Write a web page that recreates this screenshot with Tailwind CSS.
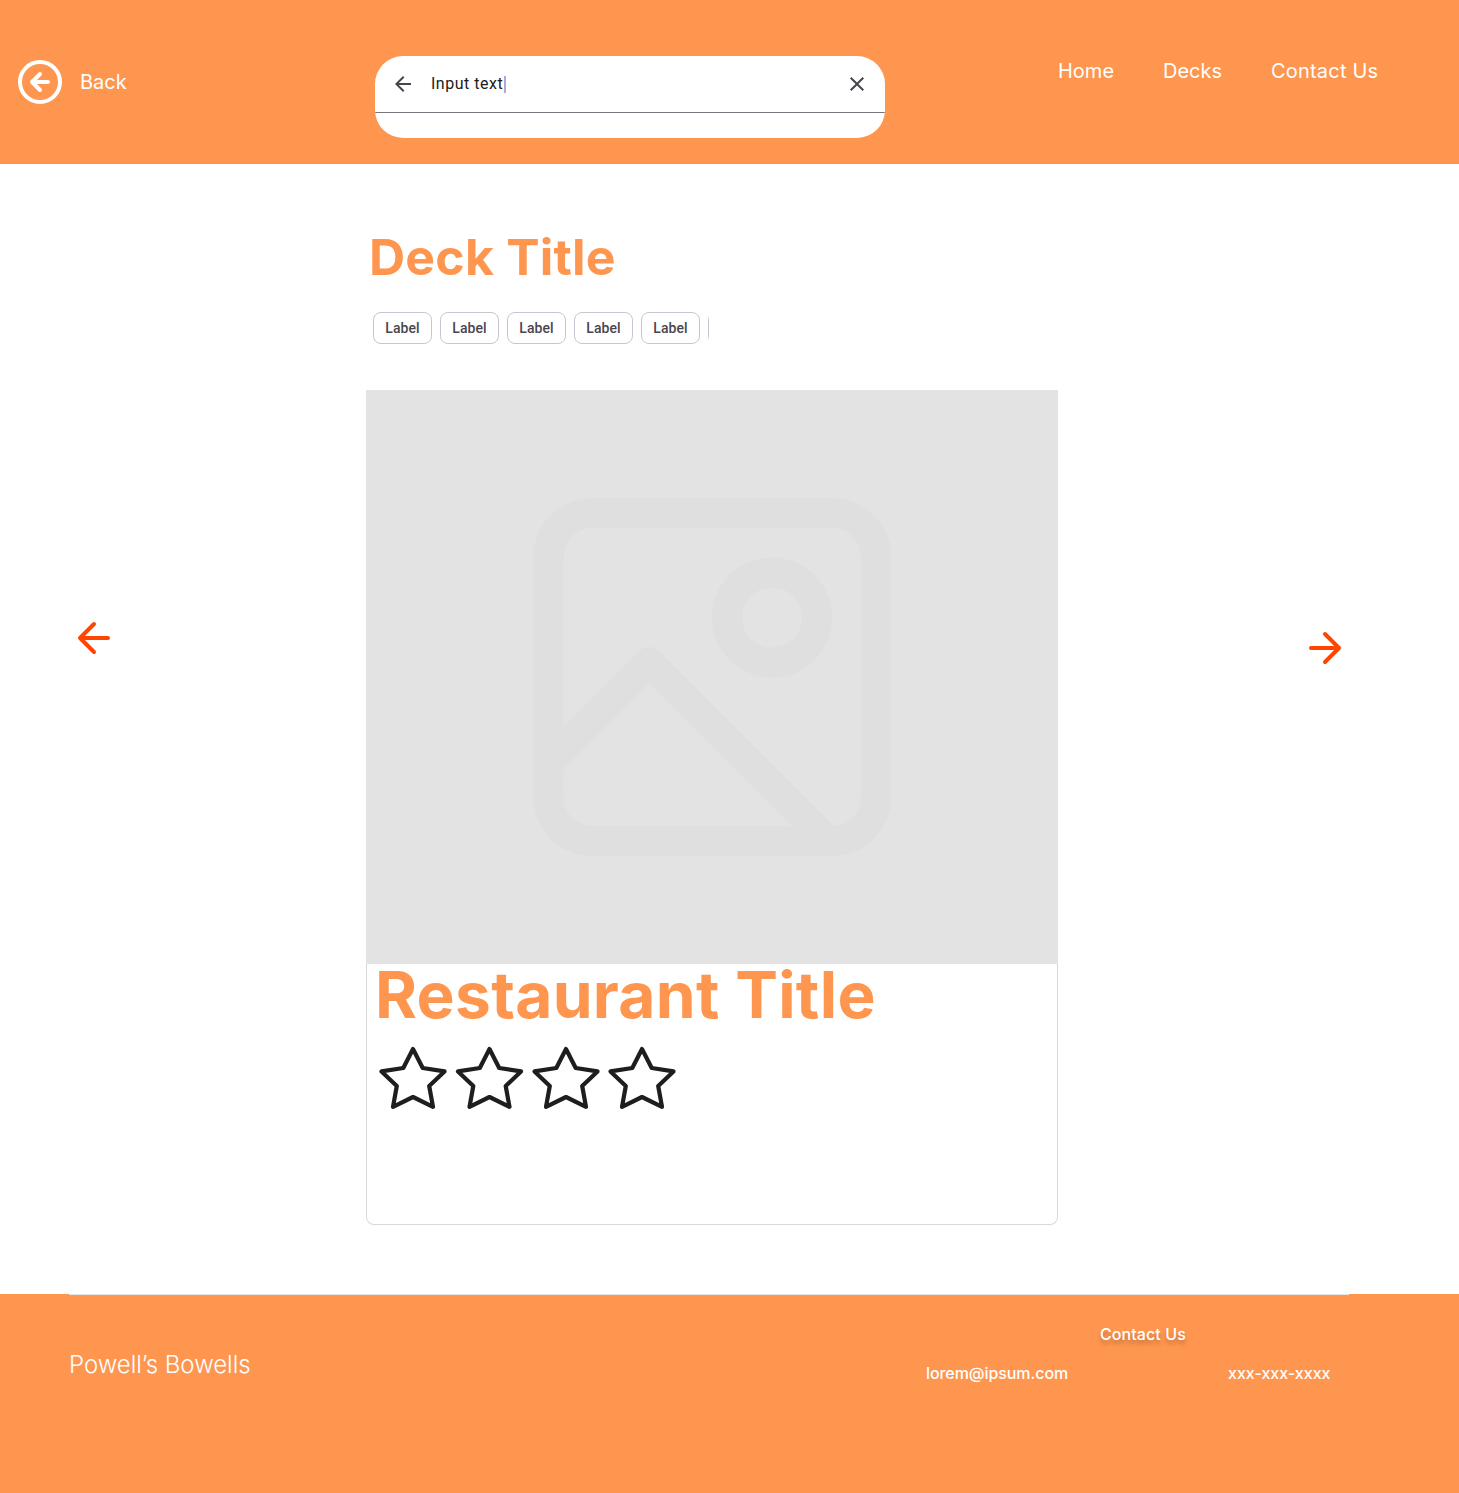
<!DOCTYPE html>
<html lang="en">
<head>
<meta charset="utf-8">
<title>Deck Title</title>
<script src="https://cdn.jsdelivr.net/npm/@tailwindcss/browser@4"></script>
</head>
<body class="w-[1459px] bg-white font-['Inter',sans-serif]">
<header class="flex h-[164px] items-start bg-[#ff964f] text-xl leading-6 text-white">
  <a class="mt-[60px] ml-[18px] flex w-[357px] items-center gap-[18px]">
    <svg class="size-11" viewBox="0 0 44 44" fill="none" stroke="currentColor" stroke-width="4" stroke-linecap="round" stroke-linejoin="round"><circle cx="22" cy="22" r="20"/><path d="M30 22H14M22 14l-8 8 8 8"/></svg>
    <span>Back</span>
  </a>
  <div class="mt-14 h-[82px] w-[510px] overflow-hidden rounded-[28px] bg-white">
    <div class="flex h-[57px] items-center border-b border-[#79747e] px-4 text-[#49454f]">
      <svg class="size-6" viewBox="0 0 24 24" fill="currentColor"><path d="M7.825 13l5.6 5.6L12 20l-8-8 8-8 1.425 1.4-5.6 5.6H20v2H7.825z"/></svg>
      <span class="ml-4 w-[73px] font-['Roboto',sans-serif] text-base tracking-[0.520px] whitespace-nowrap text-[#1d1b20]">Input text</span>
      <span class="h-[17px] w-[2px] bg-[#b3a7d2]"></span>
      <svg class="ml-auto size-6" viewBox="0 0 24 24" fill="currentColor"><path d="M6.4 19L5 17.6l5.6-5.6L5 6.4 6.4 5l5.6 5.6L17.600 5 19 6.400 13.400 12l5.600 5.600-1.400 1.400-5.600-5.600L6.400 19z"/></svg>
    </div>
  </div>
  <nav class="mt-[59px] ml-[173px] flex">
    <a class="w-[105px]">Home</a>
    <a class="w-[108px]">Decks</a>
    <a class="tracking-[0.200px]">Contact Us</a>
  </nav>
</header>

<main class="flex h-[1130px] items-start">
  <button class="mt-[454px] ml-[74px] text-[#ff4500]"><svg class="size-10" viewBox="0 0 40 40" fill="none" stroke="currentColor" stroke-width="4" stroke-linecap="round" stroke-linejoin="round"><path d="M34 20H6M20 6 6 20l14 14"/></svg></button>
  <section class="ml-[252px] w-[692px] pt-[62px]">
    <h1 class="h-[62px] pl-[3px] text-[50px] leading-[62px] font-bold tracking-[0.200px] whitespace-nowrap text-[#ff964f]">Deck Title</h1>
    <div class="mt-6 ml-[7px] flex w-[336px] gap-2 overflow-hidden font-['Roboto',sans-serif] text-sm font-medium tracking-[0.1px] text-[#49454f]">
      <span class="flex h-8 w-[59px] shrink-0 items-center justify-center rounded-lg border border-[#cac4d0]">Label</span>
      <span class="flex h-8 w-[59px] shrink-0 items-center justify-center rounded-lg border border-[#cac4d0]">Label</span>
      <span class="flex h-8 w-[59px] shrink-0 items-center justify-center rounded-lg border border-[#cac4d0]">Label</span>
      <span class="flex h-8 w-[59px] shrink-0 items-center justify-center rounded-lg border border-[#cac4d0]">Label</span>
      <span class="flex h-8 w-[59px] shrink-0 items-center justify-center rounded-lg border border-[#cac4d0]">Label</span>
      <span class="h-8 w-[59px] shrink-0 rounded-lg border border-[#cac4d0]"></span>
    </div>
    <article class="mt-[46px]">
      <svg class="block h-[574px] w-[692px] bg-[#e3e3e3]" viewBox="366 390 692 574" fill="none" stroke="#dfdfdf" stroke-width="30" stroke-linejoin="round">
        <rect x="548.500" y="513" width="327.500" height="328" rx="44"/>
        <circle cx="772" cy="617.500" r="45"/>
        <path d="M548 763.500 649.500 662 828.500 841"/>
      </svg>
      <div class="h-[261px] rounded-b-lg border border-t-0 border-[#d9d9d9] px-2">
        <h2 class="h-[62px] text-[64px] leading-[62px] font-bold tracking-[0.310px] whitespace-nowrap text-[#ff964f]">Restaurant Title</h2>
        <svg class="mt-5 ml-1 h-16 w-[300px]" viewBox="0 0 300 64" fill="none" stroke="#1e1e1e" stroke-width="4.200" stroke-linejoin="round">
          <path id="star" d="M34 3 43.700 22 65.500 25.400 50.200 40 54 60.800 34 51 14 60.800 17.800 40 2.500 25.400 24.300 22Z"/>
          <use href="#star" x="76.500"/>
          <use href="#star" x="153"/>
          <use href="#star" x="229"/>
        </svg>
      </div>
    </article>
  </section>
  <button class="mt-[464px] ml-[247px] text-[#ff4500]"><svg class="size-10" viewBox="0 0 40 40" fill="none" stroke="currentColor" stroke-width="4" stroke-linecap="round" stroke-linejoin="round"><path d="M6 20h28M20 6l14 14-14 14"/></svg></button>
</main>

<footer class="h-[199px] bg-[#ff964f] pl-[69px] text-white">
  <div class="flex w-[1280px] items-start border-t border-[#e6e6e6]">
    <div class="mt-[52px] w-[857px] text-2xl leading-9 font-light tracking-[-0.030px]">Powell’s Bowells</div>
    <div class="mt-[29px] w-[423px] text-base leading-5 font-medium">
      <div class="pl-[174px] tracking-[0.080px] [text-shadow:0_4px_4px_rgb(0_0_0/0.25)]">Contact Us</div>
      <div class="mt-[19px] flex">
        <span class="w-[302px] tracking-[-0.070px]">lorem@ipsum.com</span>
        <span class="whitespace-nowrap">xxx-xxx-xxxx</span>
      </div>
    </div>
  </div>
</footer>
</body>
</html>
